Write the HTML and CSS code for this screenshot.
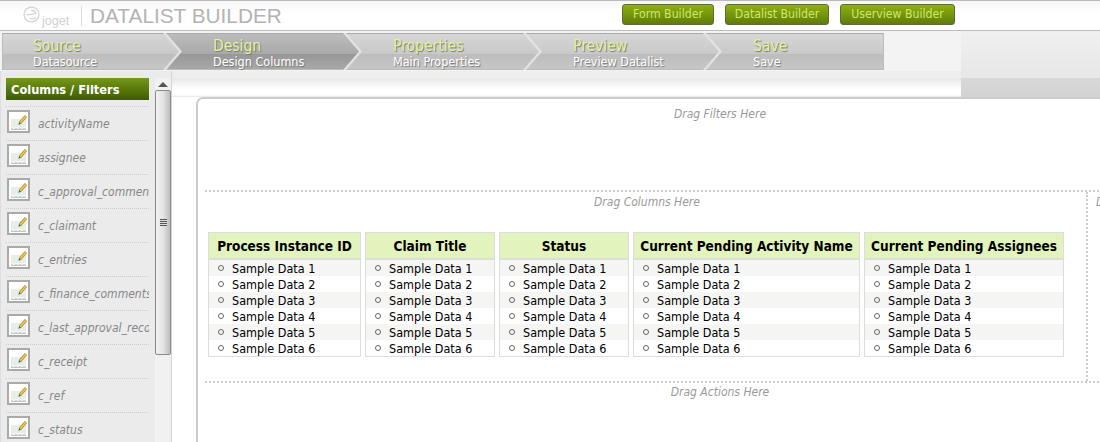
FILE: index.html
```html
<!DOCTYPE html>
<html>
<head>
    <title>Datalist Builder</title>
    <link rel="stylesheet" href="styles.css">
</head>
<body>
    <svg class="defs" width="0" height="0">
        <symbol id="field-icon" viewBox="0 0 23 23">
            <rect x="1" y="1" width="21" height="21" fill="#fff" stroke="#aaa" stroke-width="2"/>
            <path d="M4 9h15v9l-2-1-2 1-2-1-2 1-2-1-2 1-3-1z" fill="#e6eee8"/>
            <path d="M4 18l3 1 2-1 2 1 2-1 2 1 2-1 2 1v1H4z" fill="#c4c4c4"/>
            <path d="M13 13l6-7" fill="none" stroke="#a88a3a" stroke-width="3"/>
            <path d="M13 13l6-7" fill="none" stroke="#f2c84a" stroke-width="1.600"/>
            <path d="M11.500 15l.6-3 1.800 1.500z" fill="#555"/>
        </symbol>
    </svg>

    <div class="header">
        <div class="logo">
            <svg width="17" height="17" viewBox="0 0 20 20">
                <circle cx="10" cy="10" r="8.800" fill="none" stroke="#d4d4d4" stroke-width="1.500"/>
                <path d="M4 10.500c3-.2 8-1.200 11-1.600-.6-2.600-3-3.900-5.400-3.400M15.500 13.500c-2 2-5.500 2.200-7.500.6" fill="none" stroke="#d4d4d4" stroke-width="1.600"/>
            </svg>
            <span class="logo-text">joget</span>
        </div>
        <h1>DATALIST BUILDER</h1>
        <div class="header-buttons">
            <a class="btn">Form Builder</a>
            <a class="btn">Datalist Builder</a>
            <a class="btn">Userview Builder</a>
        </div>
    </div>

    <div class="steps-row">
        <div class="steps">
            <div class="step step-1"><div class="step-fill"><b>Source</b><span>Datasource</span></div></div>
            <div class="step step-2 active"><div class="step-fill"><b>Design</b><span>Design Columns</span></div></div>
            <div class="step step-3"><div class="step-fill"><b>Properties</b><span>Main Properties</span></div></div>
            <div class="step step-4"><div class="step-fill"><b>Preview</b><span>Preview Datalist</span></div></div>
            <div class="step step-5 last"><div class="step-fill"><b>Save</b><span>Save</span></div></div>
        </div>
    </div>

    <div class="workspace">
        <div class="sidebar">
            <div class="palette">
                <h2>Columns / Filters</h2>
                <div class="field"><svg class="field-icon"><use href="#field-icon"/></svg><span>activityName</span></div>
                <div class="field"><svg class="field-icon"><use href="#field-icon"/></svg><span>assignee</span></div>
                <div class="field"><svg class="field-icon"><use href="#field-icon"/></svg><span>c_approval_comments</span></div>
                <div class="field"><svg class="field-icon"><use href="#field-icon"/></svg><span>c_claimant</span></div>
                <div class="field"><svg class="field-icon"><use href="#field-icon"/></svg><span>c_entries</span></div>
                <div class="field"><svg class="field-icon"><use href="#field-icon"/></svg><span>c_finance_comments</span></div>
                <div class="field"><svg class="field-icon"><use href="#field-icon"/></svg><span>c_last_approval_record</span></div>
                <div class="field"><svg class="field-icon"><use href="#field-icon"/></svg><span>c_receipt</span></div>
                <div class="field"><svg class="field-icon"><use href="#field-icon"/></svg><span>c_ref</span></div>
                <div class="field"><svg class="field-icon"><use href="#field-icon"/></svg><span>c_status</span></div>
            </div>
            <div class="scrollbar">
                <div class="scroll-up"></div>
                <div class="scroll-thumb"><div class="scroll-grip"></div></div>
            </div>
        </div>

        <div class="main">
            <div class="canvas">
                <div class="drop-filters"><p class="hint">Drag Filters Here</p></div>
                <div class="drop-middle">
                    <div class="drop-columns">
                        <p class="hint">Drag Columns Here</p>
                        <div class="columns">
                            <div class="column">
                                <div class="column-title">Process Instance ID</div>
                                <ul>
                                    <li>Sample Data 1</li><li>Sample Data 2</li><li>Sample Data 3</li>
                                    <li>Sample Data 4</li><li>Sample Data 5</li><li>Sample Data 6</li>
                                </ul>
                            </div>
                            <div class="column">
                                <div class="column-title">Claim Title</div>
                                <ul>
                                    <li>Sample Data 1</li><li>Sample Data 2</li><li>Sample Data 3</li>
                                    <li>Sample Data 4</li><li>Sample Data 5</li><li>Sample Data 6</li>
                                </ul>
                            </div>
                            <div class="column">
                                <div class="column-title">Status</div>
                                <ul>
                                    <li>Sample Data 1</li><li>Sample Data 2</li><li>Sample Data 3</li>
                                    <li>Sample Data 4</li><li>Sample Data 5</li><li>Sample Data 6</li>
                                </ul>
                            </div>
                            <div class="column">
                                <div class="column-title">Current Pending Activity Name</div>
                                <ul>
                                    <li>Sample Data 1</li><li>Sample Data 2</li><li>Sample Data 3</li>
                                    <li>Sample Data 4</li><li>Sample Data 5</li><li>Sample Data 6</li>
                                </ul>
                            </div>
                            <div class="column">
                                <div class="column-title">Current Pending Assignees</div>
                                <ul>
                                    <li>Sample Data 1</li><li>Sample Data 2</li><li>Sample Data 3</li>
                                    <li>Sample Data 4</li><li>Sample Data 5</li><li>Sample Data 6</li>
                                </ul>
                            </div>
                        </div>
                    </div>
                    <div class="drop-side"><p class="hint">Drag</p></div>
                </div>
                <div class="drop-actions"><p class="hint">Drag Actions Here</p></div>
            </div>
        </div>
    </div>
</body>
</html>
```

FILE: styles.css
```css
html, body {
    margin: 0;
    height: 442px;
    overflow: hidden;
}

body {
    font-family: "DejaVu Sans Condensed", "DejaVu Sans", Verdana, sans-serif;
    font-stretch: condensed;
    background: #fff;
    color: #000;
}

.defs {
    display: block;
    height: 0;
}

/* header */
.header {
    display: flex;
    align-items: center;
    height: 29px;
    border-top: 1px solid #bbb;
    border-bottom: 1px solid #bbb;
    background: linear-gradient(#f6f6f6, #fff 40%);
}

.logo {
    display: flex;
    align-items: flex-start;
    gap: 2px;
    box-sizing: border-box;
    width: 59px;
    height: 20px;
    margin-left: 23px;
    border-right: 1px solid #ddd;
}

.logo-text {
    font-family: "Liberation Sans", Arial, sans-serif;
    font-stretch: normal;
    font-size: 12.500px;
    line-height: 12px;
    color: #d0d0d0;
    margin-top: 9px;
}

h1 {
    margin: 0 0 0 8px;
    font-family: "Liberation Sans", Arial, sans-serif;
    font-stretch: normal;
    font-size: 20.800px;
    font-weight: normal;
    color: #b3b3b3;
}

.header-buttons {
    display: grid;
    grid-template-columns: 92px 104px 115px;
    gap: 11px;
    margin-left: auto;
    margin-right: 145px;
    margin-top: -3px;
}

.btn {
    display: block;
    height: 19px;
    line-height: 19px;
    font-size: 12.200px;
    text-align: center;
    color: #cde86a;
    background: linear-gradient(#8fb00f, #5f7c0a);
    border: 1px solid #5c6b38;
    border-radius: 3px;
}

/* wizard steps */
.steps-row {
    height: 38px;
    padding: 2px 0 0 2px;
    background:
        linear-gradient(#f0f0f0, #e8e8e8) no-repeat right top / 139px 100%,
        #f3f3f3;
}

.steps {
    display: flex;
    height: 37px;
}

.step {
    position: relative;
    width: 196px;
    height: 37px;
    margin-right: -16px;
    background: #e2e2e2;
    clip-path: polygon(0 0, 180px 0, 196px 50%, 180px 100%, 0 100%);
}

.step-1 { z-index: 5; width: 180px; clip-path: polygon(0 0, 164px 0, 180px 50%, 164px 100%, 0 100%); }
.step-2 { z-index: 4; }
.step-3 { z-index: 3; }
.step-4 { z-index: 2; }
.step-5 { z-index: 1; }

.step-fill {
    box-sizing: border-box;
    height: 37px;
    padding-left: 47px;
    border-top: 1px solid #aaa;
    border-bottom: 1px solid #bbb;
    background: linear-gradient(#d6d6d6, #c9c9c9 57%, #bdbdbd 57%, #c6c6c6);
    clip-path: polygon(0 0, 177px 0, 193px 50%, 177px 100%, 0 100%);
}

.step-1 .step-fill {
    padding-left: 30px;
    border-left: 1px solid #bbb;
    clip-path: polygon(0 0, 161px 0, 177px 50%, 161px 100%, 0 100%);
}

.step.active .step-fill {
    background: linear-gradient(#bcbcbc, #a9a9a9 57%, #979797 57%, #a8a8a8);
}

.step.last {
    width: 178px;
    clip-path: none;
}

.step.last .step-fill {
    border-right: 1px solid #bbb;
    clip-path: none;
}

.step-fill b,
.step-fill span {
    display: block;
    font-weight: normal;
    text-shadow: 1px 1px 1px #777;
}

.step-fill b {
    margin-top: 3px;
    font-size: 15.500px;
    line-height: 18px;
    color: #e2f29c;
}

.step-fill span {
    font-size: 12.500px;
    line-height: 14px;
    color: #fff;
}

/* sidebar */
.workspace {
    display: flex;
    height: 371px;
}

.sidebar {
    display: flex;
    flex: none;
    width: 171px;
    background: #ebebeb;
    border-right: 1px solid #d4d4d4;
    overflow: hidden;
}

.palette {
    flex: none;
    box-sizing: border-box;
    width: 155px;
    padding: 7px 6px 0;
    border-left: 1px solid #ddd;
}

.palette h2 {
    margin: 0 0 6px -1px;
    height: 22px;
    padding-left: 5px;
    font-size: 12.700px;
    line-height: 23px;
    font-weight: bold;
    color: #fff;
    background: linear-gradient(#75981a, #3f5b00);
}

.field {
    display: flex;
    align-items: center;
    gap: 8px;
    width: 143px;
    margin-left: -1px;
    height: 33px;
    border-top: 1px dotted #ccc;
    overflow: hidden;
    white-space: nowrap;
}

.field-icon {
    flex: none;
    width: 23px;
    height: 23px;
    margin: 0 0 5px 1px;
}

.field span {
    font-size: 12px;
    font-style: italic;
    color: #888;
}

.scrollbar {
    flex: none;
    width: 16px;
    margin-top: 7px;
    background: #f1f1f1;
}

.scroll-up {
    width: 0;
    height: 0;
    margin: 4px auto 3px;
    border-left: 5px solid transparent;
    border-right: 5px solid transparent;
    border-bottom: 5px solid #555;
}

.scroll-thumb {
    display: flex;
    align-items: center;
    justify-content: center;
    box-sizing: border-box;
    height: 265px;
    border: 1px solid #8a8a8a;
    border-radius: 2px;
    background: linear-gradient(90deg, #f2f2f2, #e4e4e4 50%, #bdbdbd);
}

.scroll-grip {
    width: 7px;
    height: 7px;
    background: repeating-linear-gradient(#555 0 1px, #ddd 1px 2px);
}

/* main area */
.main {
    flex: 1;
    padding: 26px 0 0 24px;
    overflow: hidden;
    background:
        linear-gradient(#d9d9d9, #d2d2d2) no-repeat right 7px / 139px 19px,
        linear-gradient(#e8e8e8, #e8e8e8) no-repeat right top / 139px 7px,
        linear-gradient(#eee 7px, #e6e6e6 7px, #fff 18px, #fff 24px, #e4e4e4 26px) no-repeat left top / 100% 26px,
        #fff;
}

.canvas {
    width: 1030px;
    height: 360px;
    background: #fff;
    border-top: 2px solid #ccc;
    border-left: 2px solid #ccc;
    border-top-left-radius: 7px;
    padding-left: 7px;
}

.hint {
    margin: 0;
    font-size: 12px;
    font-style: italic;
    line-height: 14px;
    color: #999;
    text-align: center;
}

.drop-filters {
    box-sizing: border-box;
    height: 91px;
    padding-top: 8px;
}

.drop-middle {
    display: flex;
    height: 189px;
    border-top: 2px dotted #ccc;
    border-bottom: 2px dotted #ccc;
}

.drop-columns {
    box-sizing: border-box;
    flex: none;
    width: 883px;
    padding: 3px 0 0 3px;
    border-right: 2px dotted #ccc;
}

.columns {
    display: grid;
    grid-template-columns: 153px 130px 130px 227px 200px;
    gap: 4px;
    margin-top: 23px;
}

.column {
    box-sizing: border-box;
    height: 125px;
    border: 1px solid #ddd;
}

.column-title {
    height: 25px;
    font-size: 13.500px;
    font-weight: bold;
    line-height: 26px;
    text-align: center;
    white-space: nowrap;
    background: #e2f3bd;
    border-bottom: 2px solid #ddd;
}

.column ul {
    margin: 0;
    padding: 0;
    list-style: none;
}

.column li {
    height: 16px;
    padding-left: 9px;
    font-size: 12.500px;
    line-height: 18px;
}

.column li::before {
    content: "";
    display: inline-block;
    box-sizing: border-box;
    width: 6px;
    height: 6px;
    margin-right: 8px;
    vertical-align: 2px;
    border: 1.500px solid #666;
    border-radius: 50%;
}

.column li:nth-child(odd) {
    background: #f5f5f3;
}

.drop-side {
    flex: 1;
    padding: 3px 0 0 8px;
    white-space: nowrap;
}

.drop-side .hint {
    text-align: left;
}

.drop-actions {
    padding-top: 2px;
}
```
